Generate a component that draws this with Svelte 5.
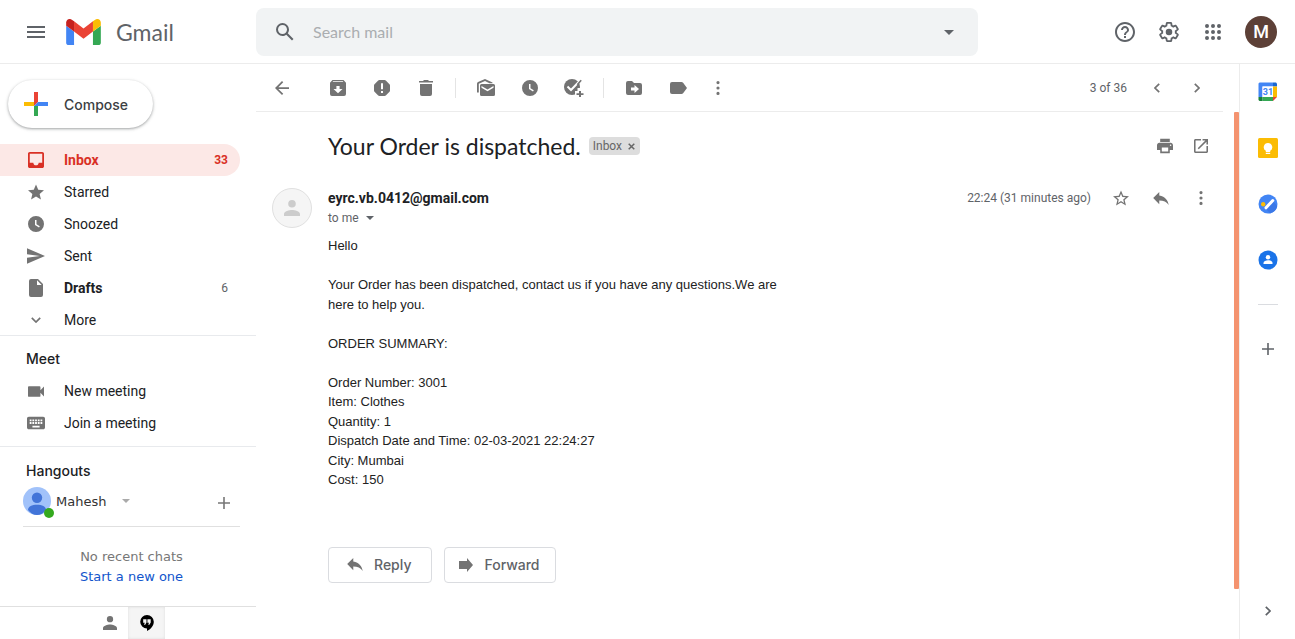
<script>
  const icons = {
    menu: { vb: '3 6 18 12', w: 18, h: 12, d: 'M3 18h18v-2H3v2zm0-5h18v-2H3v2zm0-7v2h18V6H3z' },
    search: { vb: '0 0 24 24', w: 24, h: 24, d: 'M20.49 19l-5.73-5.73C15.53 12.2 16 10.91 16 9.5A6.5 6.5 0 1 0 9.5 16c1.41 0 2.7-.47 3.77-1.24L19 20.49 20.49 19zM5 9.5C5 7.01 7.01 5 9.5 5S14 7.01 14 9.5 11.99 14 9.5 14 5 11.99 5 9.5z' },
    caret: { vb: '0 0 10 5', w: 10, h: 5, d: 'M0 0h10L5 5z' },
    smallCaret: { vb: '0 0 8 4', w: 8, h: 4, d: 'M0 0h8L4 4z' },
    help: { vb: '2 2 20 20', w: 20, h: 20, d: 'M11 18h2v-2h-2v2zm1-16C6.48 2 2 6.48 2 12s4.48 10 10 10 10-4.48 10-10S17.52 2 12 2zm0 18c-4.41 0-8-3.59-8-8s3.59-8 8-8 8 3.59 8 8-3.59 8-8 8zm0-14c-2.21 0-4 1.79-4 4h2c0-1.1.9-2 2-2s2 .9 2 2c0 2-3 1.75-3 5h2c0-2.25 3-2.5 3-5 0-2.21-1.79-4-4-4z' },
    gear: {
      vb: '1 1 22 22', w: 20, h: 20,
      d: 'M12 8.4a3.6 3.6 0 1 0 0 7.2 3.6 3.6 0 0 0 0-7.2z',
      s: 'M19.43 12.98c.04-.32.07-.64.07-.98s-.03-.66-.07-.98l2.11-1.65c.19-.15.24-.42.12-.64l-2-3.46c-.12-.22-.39-.3-.61-.22l-2.49 1c-.52-.4-1.08-.73-1.69-.98l-.38-2.65C14.46 2.18 14.25 2 14 2h-4c-.25 0-.46.18-.49.42l-.38 2.65c-.61.25-1.17.59-1.69.98l-2.49-1c-.23-.09-.49 0-.61.22l-2 3.46c-.13.22-.07.49.12.64l2.11 1.65c-.04.32-.07.65-.07.98s.03.66.07.98l-2.11 1.65c-.19.15-.24.42-.12.64l2 3.46c.12.22.39.3.61.22l2.49-1c.52.4 1.08.73 1.69.98l.38 2.65c.03.24.24.42.49.42h4c.25 0 .46-.18.49-.42l.38-2.65c.61-.25 1.17-.59 1.69-.98l2.49 1c.23.09.49 0 .61-.22l2-3.46c.12-.22.07-.49-.12-.64z'
    },
    apps: { vb: '4 4 16 16', w: 16, h: 16, d: 'M6 4a2 2 0 1 0 0 4 2 2 0 0 0 0-4zm6 0a2 2 0 1 0 0 4 2 2 0 0 0 0-4zm6 0a2 2 0 1 0 0 4 2 2 0 0 0 0-4zM6 10a2 2 0 1 0 0 4 2 2 0 0 0 0-4zm6 0a2 2 0 1 0 0 4 2 2 0 0 0 0-4zm6 0a2 2 0 1 0 0 4 2 2 0 0 0 0-4zM6 16a2 2 0 1 0 0 4 2 2 0 0 0 0-4zm6 0a2 2 0 1 0 0 4 2 2 0 0 0 0-4zm6 0a2 2 0 1 0 0 4 2 2 0 0 0 0-4z' },
    inbox: { vb: '3 3 18 18', w: 16, h: 16, d: 'M19 3H5c-1.1 0-2 .9-2 2v14c0 1.1.9 2 2 2h14c1.1 0 2-.9 2-2V5c0-1.1-.9-2-2-2zm0 12h-4c0 1.66-1.35 3-3 3s-3-1.34-3-3H5V5h14v10z' },
    star: { vb: '2 2 20 19', w: 16, h: 16, d: 'M12 17.27L18.18 21l-1.64-7.03L22 9.24l-7.19-.61L12 2 9.19 8.63 2 9.24l5.46 4.73L5.82 21z' },
    starOutline: { vb: '2 2 20 19', w: 16, h: 16, d: 'M22 9.24l-7.19-.62L12 2 9.19 8.63 2 9.24l5.46 4.73L5.82 21 12 17.27 18.18 21l-1.63-7.03L22 9.24zM12 15.4l-3.76 2.27 1-4.28-3.32-2.88 4.38-.38L12 6.1l1.71 4.04 4.38.38-3.32 2.88 1 4.28L12 15.4z' },
    clock: { vb: '0 0 16 16', w: 16, h: 16, d: 'M8 0a8 8 0 1 0 0 16A8 8 0 0 0 8 0zM7 4h1.5v4.2l3.3 2-.8 1.3-4-2.4z' },
    send: { vb: '2 3 21 18', w: 18, h: 16, d: 'M2 21L23 12 2 3v7l15 2-15 2z' },
    file: { vb: '0 0 14 18', w: 14, h: 18, d: 'M2 0h7l5 5v11a2 2 0 0 1-2 2H2a2 2 0 0 1-2-2V2a2 2 0 0 1 2-2zM8 1.3V6h4.7z' },
    down: { vb: '0 0 10 6', w: 10, h: 6, s: 'M.8.8L5 5 9.2.8', sw: 1.7 },
    video: { vb: '3 6 18 12', w: 16, h: 11, d: 'M17 10.5V7c0-.55-.45-1-1-1H4c-.55 0-1 .45-1 1v10c0 .55.45 1 1 1h12c.55 0 1-.45 1-1v-3.5l4 4v-11l-4 4z' },
    keyboard: { vb: '2 5 20 14', w: 18, h: 14, d: 'M20 5H4c-1.1 0-2 .9-2 2v10c0 1.1.9 2 2 2h16c1.1 0 2-.9 2-2V7c0-1.1-.9-2-2-2zm-9 3h2v2h-2V8zm0 3h2v2h-2v-2zM8 8h2v2H8V8zm0 3h2v2H8v-2zm-1 2H5v-2h2v2zm0-3H5V8h2v2zm9 7H8v-2h8v2zm0-4h-2v-2h2v2zm0-3h-2V8h2v2zm3 3h-2v-2h2v2zm0-3h-2V8h2v2z' },
    plus: { vb: '0 0 12 12', w: 12, h: 12, d: 'M5.2 0h1.6v5.2H12v1.6H6.8V12H5.2V6.8H0V5.2h5.2z' },
    person: { vb: '4 4 16 16', w: 14, h: 14, d: 'M12 11.2a3.6 3.6 0 1 0 0-7.2 3.6 3.6 0 0 0 0 7.2zm0 2.4c-2.67 0-8 1.34-8 4.2V20h16v-2.200c0-2.860-5.330-4.200-8-4.200z' },
    profile: { vb: '4 4 16 16', w: 16, h: 16, d: 'M12 11.600a3.800 3.800 0 1 0 0-7.600 3.800 3.800 0 0 0 0 7.600zm0 2.400c-2.670 0-8 1.340-8 4v2h16v-2c0-2.660-5.330-4-8-4z' },
    hangouts: { vb: '0 0 14 16', w: 14, h: 16, d: 'M7 0a6.8 6.8 0 0 0 0 13.6V16c3.6-1.7 6.8-5 6.8-9.2A6.8 6.8 0 0 0 7 0zM3.2 4.3h3.3v3.2L5.2 9.7H4l.8-2H3.2zm4.2 0h3.3v3.2L9.4 9.7H8.2l.8-2H7.4z' },
    back: { vb: '4 4 16 16', w: 14, h: 14, d: 'M20 11H7.83l5.59-5.59L12 4l-8 8 8 8 1.41-1.41L7.83 13H20v-2z' },
    archive: { vb: '0 0 16 16', w: 16, h: 16, d: 'M2.5 0h11L16 2.8V14a2 2 0 0 1-2 2H2a2 2 0 0 1-2-2V2.8zM2.6 2h10.8l-.6-.8H3.2zM6.4 6v3H3.5L8 13.2 12.5 9H9.6V6z' },
    spam: { vb: '0 0 16 16', w: 16, h: 16, d: 'M5.4 0h5.2a2 2 0 0 1 1.2.5l3.7 3.7a2 2 0 0 1 .5 1.2v5.2a2 2 0 0 1-.5 1.2l-3.7 3.7a2 2 0 0 1-1.2.5H5.4a2 2 0 0 1-1.2-.5L.5 11.8a2 2 0 0 1-.5-1.2V5.4a2 2 0 0 1 .5-1.2L4.2.5A2 2 0 0 1 5.4 0zM7 3.300v6h2v-6zM7 11v2h2v-2z' },
    trash: { vb: '0 0 14 16', w: 14, h: 16, d: 'M1 4h12v10a2 2 0 0 1-2 2H3a2 2 0 0 1-2-2zM0 1h4l1-1h4l1 1h4v1.500H0z' },
    unread: { vb: '0 0 18 17', w: 18, h: 17, d: 'M4.5 5h12A1.5 1.5 0 0 1 18 6.5v9a1.5 1.5 0 0 1-1.5 1.5h-12A1.5 1.5 0 0 1 3 15.5v-9A1.5 1.5 0 0 1 4.5 5zM4.500 7v1.800l6 3.400 6-3.400V7l-6 3.400zM0 13.5V4.8a2 2 0 0 1 1-1.7L8 0l7.500 3.600v.6h-3L8 2 1.800 4.800v8.700z' },
    folder: { vb: '0 0 16 14', w: 16, h: 14, d: 'M2 0h4l2 2h6a2 2 0 0 1 2 2v8a2 2 0 0 1-2 2H2a2 2 0 0 1-2-2V2a2 2 0 0 1 2-2zM5 6.5v3h3.500V12L13 8 8.500 4v2.500z' },
    label: { vb: '0 0 17 12', w: 17, h: 12, d: 'M2 0h9.5a2 2 0 0 1 1.6.8L17 6l-3.900 5.200a2 2 0 0 1-1.6.8H2a2 2 0 0 1-2-2V2a2 2 0 0 1 2-2z' },
    more: { vb: '0 0 4 14', w: 4, h: 14, d: 'M2 0a1.6 1.6 0 1 0 0 3.200A1.600 1.600 0 0 0 2 0zm0 5.400a1.600 1.600 0 1 0 0 3.200 1.600 1.600 0 0 0 0-3.200zm0 5.400a1.600 1.600 0 1 0 0 3.200 1.600 1.600 0 0 0 0-3.200z' },
    left: { vb: '0 0 6 10', w: 6, h: 10, s: 'M5.2.8L1 5l4.200 4.200', sw: 1.7 },
    right: { vb: '0 0 6 10', w: 6, h: 10, s: 'M.8.8L5 5 .8 9.200', sw: 1.7 },
    print: { vb: '2 3 20 18', w: 16, h: 16, d: 'M19 8H5c-1.66 0-3 1.34-3 3v6h4v4h12v-4h4v-6c0-1.66-1.34-3-3-3zm-3 11H8v-5h8v5zm3-7c-.55 0-1-.45-1-1s.45-1 1-1 1 .45 1 1-.45 1-1 1zm-1-9H6v4h12V3z' },
    open: { vb: '3 3 18 18', w: 14, h: 14, d: 'M19 19H5V5h7V3H5c-1.11 0-2 .9-2 2v14c0 1.1.89 2 2 2h14c1.1 0 2-.9 2-2v-7h-2v7zM14 3v2h3.59l-9.83 9.83 1.41 1.41L19 6.41V10h2V3h-7z' },
    reply: { vb: '3 5 18 15', w: 16, h: 13, d: 'M10 9V5l-7 7 7 7v-4.100c5 0 8.500 1.600 11 5.100-1-5-4-10-11-11z' },
    forward: { vb: '0 0 14 14', w: 14, h: 14, d: 'M0 3h8V0l6 7-6 7v-3H0z' },
    close: { vb: '0 0 7 7', w: 7, h: 7, s: 'M.7.7l5.600 5.600M6.300.7L.7 6.300', sw: 1.5 }
  };

  const folders = [
    { name: 'Inbox', icon: 'inbox', count: 33, active: true },
    { name: 'Starred', icon: 'star' },
    { name: 'Snoozed', icon: 'clock' },
    { name: 'Sent', icon: 'send' },
    { name: 'Drafts', icon: 'file', count: 6, bold: true },
    { name: 'More', icon: 'down' }
  ];
  const meetings = [
    { name: 'New meeting', icon: 'video' },
    { name: 'Join a meeting', icon: 'keyboard' }
  ];
  const order = [
    'Order Number: 3001',
    'Item: Clothes',
    'Quantity: 1',
    'Dispatch Date and Time: 02-03-2021 22:24:27',
    'City: Mumbai',
    'Cost: 150'
  ];
</script>

{#snippet icon(name)}
  {@const i = icons[name]}
  <svg class="icon" viewBox={i.vb} width={i.w} height={i.h} aria-hidden="true">
    {#if i.d}<path d={i.d} fill="currentColor" fill-rule="evenodd" />{/if}
    {#if i.s}<path d={i.s} fill="none" stroke="currentColor" stroke-width={i.sw ?? 2} />{/if}
  </svg>
{/snippet}

{#snippet tool(name, label)}
  <button class="tool" aria-label={label}>{@render icon(name)}</button>
{/snippet}

<div class="page">
  <header class="top">
    <div class="brand">
      <button class="tool" aria-label="Main menu">{@render icon('menu')}</button>
      <a class="logo" href="#inbox">
        <svg viewBox="52 42 88 66" width="35" height="26" aria-hidden="true">
          <path fill="#4285f4" d="M58 108h14V74L52 59v43c0 3.320 2.690 6 6 6" />
          <path fill="#34a853" d="M120 108h14c3.320 0 6-2.690 6-6V59l-20 15" />
          <path fill="#fbbc04" d="M120 48v26l20-15v-8c0-7.420-8.470-11.650-14.400-7.200" />
          <path fill="#ea4335" d="M72 74V48l24 18 24-18v26L96 92" />
          <path fill="#c5221f" d="M52 51v8l20 15V48l-5.600-4.200c-5.940-4.450-14.400-.22-14.400 7.200" />
        </svg>
        <span>Gmail</span>
      </a>
    </div>
    <form class="search" role="search">
      <button class="find" type="button" aria-label="Search">{@render icon('search')}</button>
      <input type="text" placeholder="Search mail" aria-label="Search mail" />
      <button class="options" type="button" aria-label="Search options">{@render icon('caret')}</button>
    </form>
    <div class="account">
      {@render tool('help', 'Support')}
      {@render tool('gear', 'Settings')}
      {@render tool('apps', 'Apps')}
      <button class="me" aria-label="Account">M</button>
    </div>
  </header>

  <div class="body">
    <aside class="side">
      <button class="compose">
        <svg viewBox="0 0 24 24" width="24" height="24" aria-hidden="true">
          <path fill="#ea4335" d="M10 0h4v10l-4 4z" />
          <path fill="#fbbc04" d="M0 10h10v4H0z" />
          <path fill="#4285f4" d="M14 10h10v4H10z" />
          <path fill="#34a853" d="M10 14h4v10h-4z" />
        </svg>
        Compose
      </button>

      <nav>
        {#each folders as f}
          <a class="row" class:active={f.active} class:bold={f.bold} href="#{f.name}">
            <span class="glyph">{@render icon(f.icon)}</span>
            <span class="name">{f.name}</span>
            {#if f.count}<span class="count">{f.count}</span>{/if}
          </a>
        {/each}
      </nav>

      <section class="block">
        <h2>Meet</h2>
        {#each meetings as m}
          <a class="row" href="#{m.icon}">
            <span class="glyph">{@render icon(m.icon)}</span>
            <span class="name">{m.name}</span>
          </a>
        {/each}
      </section>

      <section class="chat">
        <h2>Hangouts</h2>
        <div class="profile">
          <span class="face">
            <svg viewBox="0 0 28 28" width="28" height="28" aria-hidden="true">
              <circle cx="14" cy="14" r="14" fill="#a1c2fa" />
              <circle cx="14" cy="10.8" r="5.2" fill="#4274d8" />
              <path d="M5 23c0-3.500 4-5.200 9-5.200s9 1.700 9 5.200c-2.300 3-5.500 5-9 5s-6.700-2-9-5z" fill="#4274d8" />
            </svg>
            <i class="online"></i>
          </span>
          <button class="status">Mahesh {@render icon('smallCaret')}</button>
          <button class="add" aria-label="New conversation">{@render icon('plus')}</button>
        </div>
        <p>No recent chats<br /><a href="#chat">Start a new one</a></p>
      </section>

      <footer class="tabs">
        <button aria-label="Contacts">{@render icon('person')}</button>
        <button class="on" aria-label="Hangouts conversations">{@render icon('hangouts')}</button>
      </footer>
    </aside>

    <main>
      <div class="toolbar">
        <div class="group first">{@render tool('back', 'Back to Inbox')}</div>
        <div class="group">
          {@render tool('archive', 'Archive')}
          {@render tool('spam', 'Report spam')}
          {@render tool('trash', 'Delete')}
        </div>
        <div class="group">
          {@render tool('unread', 'Mark as unread')}
          {@render tool('clock', 'Snooze')}
          <button class="tool" aria-label="Add to Tasks">
            <svg class="icon" viewBox="0 0 20 18" width="20" height="18" aria-hidden="true">
              <circle cx="8" cy="8" r="8" fill="currentColor" />
              <path d="M3.500 7.500L7 11l10-10.500" fill="none" stroke="#fff" stroke-width="2" />
              <path d="M13.300 5.800L17.200 1.300" fill="none" stroke="currentColor" stroke-width="1.6" />
              <path d="M11 12h2.500V9H20v9h-9z" fill="#fff" />
              <path d="M15 12h2v2.200h2.500v1.800H17V18h-2v-2h-2.500v-1.800H15z" fill="currentColor" />
            </svg>
          </button>
        </div>
        <div class="group">
          {@render tool('folder', 'Move to')}
          {@render tool('label', 'Labels')}
          <button class="tool narrow" aria-label="More">{@render icon('more')}</button>
        </div>
        <div class="pager">
          <span>3 of 36</span>
          {@render tool('left', 'Newer')}
          {@render tool('right', 'Older')}
        </div>
      </div>

      <div class="view">
        <article>
          <div class="subject">
            <h1>Your Order is dispatched.</h1>
            <span class="tag">Inbox <button aria-label="Remove label Inbox">{@render icon('close')}</button></span>
            <div class="actions">
              {@render tool('print', 'Print all')}
              {@render tool('open', 'In new window')}
            </div>
          </div>

          <div class="message">
            <span class="sender">{@render icon('profile')}</span>
            <div class="content">
              <div class="meta">
                <div>
                  <h3>eyrc.vb.0412@gmail.com</h3>
                  <button class="to">to me {@render icon('smallCaret')}</button>
                </div>
                <div class="when">
                  <span>22:24 (31 minutes ago)</span>
                  {@render tool('starOutline', 'Star')}
                  {@render tool('reply', 'Reply')}
                  {@render tool('more', 'More')}
                </div>
              </div>
              <div class="text">
                Hello<br /><br />
                Your Order has been dispatched, contact us if you have any questions.We are<br />
                here to help you.<br /><br />
                ORDER SUMMARY:<br /><br />
                {#each order as line}{line}<br />{/each}
              </div>
              <div class="respond">
                <button>{@render icon('reply')} Reply</button>
                <button>{@render icon('forward')} Forward</button>
              </div>
            </div>
          </div>
        </article>
        <div class="track"><div class="thumb"></div></div>
      </div>
    </main>

    <aside class="addons">
      <button aria-label="Calendar">
        <svg viewBox="0 0 20 20" width="20" height="20" aria-hidden="true">
          <path fill="#4285f4" d="M1.500.5H15v4H4.500V15H.5V1.500z" />
          <path fill="#1967d2" d="M15 .5h3l1 1v3h-4z" />
          <path fill="#fbbc04" d="M15 4.500h4V15h-4z" />
          <path fill="#34a853" d="M4.500 15H15v4H4.500z" />
          <path fill="#188038" d="M.5 15h4v4h-3l-1-1z" />
          <path fill="#ea4335" d="M15 15h4l-4 4z" />
          <path fill="#fff" d="M4.500 4.500H15V15H4.500z" />
          <text x="10" y="13" text-anchor="middle">31</text>
        </svg>
      </button>
      <button aria-label="Keep">
        <svg viewBox="0 0 20 20" width="20" height="20" aria-hidden="true">
          <rect width="20" height="20" rx="1.5" fill="#fbbc04" />
          <path fill="#fff" d="M10 5a4.200 4.200 0 0 0-2.200 7.800V14h4.400v-1.200A4.200 4.200 0 0 0 10 5zM7.800 14.800h4.400V16H7.800z" />
        </svg>
      </button>
      <button aria-label="Tasks">
        <svg viewBox="0 0 20 20" width="20" height="20" aria-hidden="true">
          <circle cx="10" cy="10" r="9.5" fill="#4285f4" />
          <path d="M8 15l7-8 4.300 5a9.500 9.500 0 0 1-7.300 7.300z" fill="#3b78e7" />
          <path d="M8 13.800L14.800 6.500" stroke="#fff" stroke-width="3" stroke-linecap="round" />
          <circle cx="5.2" cy="10.2" r="2.2" fill="#fbbc04" />
        </svg>
      </button>
      <button aria-label="Contacts">
        <svg viewBox="0 0 20 20" width="20" height="20" aria-hidden="true">
          <circle cx="10" cy="10" r="9.5" fill="#1a73e8" />
          <circle cx="10" cy="7.2" r="2.2" fill="#fff" />
          <path d="M5.500 14v-1c0-1.800 2.500-2.700 4.500-2.700s4.500.9 4.500 2.700v1z" fill="#fff" />
        </svg>
      </button>
      <hr />
      <button aria-label="Get add-ons">{@render icon('plus')}</button>
      <button class="hide" aria-label="Hide side panel">{@render icon('right')}</button>
    </aside>
  </div>
</div>

<style>
  :global(body) {
    margin: 0;
    background: #fff;
  }
  .page {
    display: flex;
    flex-direction: column;
    min-height: 100vh;
    font-family: Roboto, 'Liberation Sans', sans-serif;
    font-size: 14px;
    color: #202124;
  }
  .page * {
    box-sizing: border-box;
  }
  button {
    display: flex;
    align-items: center;
    justify-content: center;
    padding: 0;
    border: 0;
    background: none;
    color: inherit;
    font: inherit;
    cursor: pointer;
  }
  a {
    color: inherit;
    text-decoration: none;
  }
  h1, h2, h3, p {
    margin: 0;
    font-weight: 400;
  }
  svg {
    display: block;
    flex: none;
  }
  .tool {
    width: 44px;
    height: 40px;
    color: #737373;
  }

  .top {
    display: flex;
    align-items: center;
    height: 64px;
    padding-right: 18px;
    border-bottom: 1px solid #ececec;
  }
  .top .tool {
    color: #5f6368;
  }
  .brand {
    display: flex;
    align-items: center;
    flex: none;
    width: 256px;
    padding-left: 14px;
  }
  .logo {
    display: flex;
    align-items: center;
    gap: 15px;
    margin-left: 8px;
    font-family: Lato, sans-serif;
    font-size: 23px;
    color: #5f6368;
  }
  .search {
    display: flex;
    align-items: center;
    flex: 1;
    max-width: 722px;
    height: 48px;
    border-radius: 8px;
    background: #f1f3f4;
  }
  .find {
    width: 57px;
    height: 48px;
    color: #5f6368;
  }
  .search input {
    flex: 1;
    min-width: 0;
    padding: 0;
    border: 0;
    outline: 0;
    background: none;
    font-family: Lato, sans-serif;
    font-size: 16px;
    color: #202124;
  }
  .search input::placeholder {
    color: #aaadb0;
    opacity: 1;
  }
  .options {
    width: 58px;
    height: 48px;
    padding-top: 1px;
    color: #5f6368;
  }
  .account {
    display: flex;
    align-items: center;
    margin-left: auto;
  }
  .me {
    width: 32px;
    height: 32px;
    margin-left: 10px;
    border-radius: 50%;
    background: #5d4037;
    color: #fff;
    font-size: 18px;
    font-weight: 500;
  }

  .body {
    display: grid;
    grid-template-columns: 256px minmax(0, 1fr) 56px;
    flex: 1;
  }

  .side {
    display: flex;
    flex-direction: column;
    padding-top: 16px;
  }
  .compose {
    align-self: flex-start;
    gap: 16px;
    height: 48px;
    margin: 0 0 16px 8px;
    padding: 0 25px 0 16px;
    border-radius: 24px;
    box-shadow: 0 1px 2px rgba(60, 64, 67, 0.3), 0 1px 3px 1px rgba(60, 64, 67, 0.15);
    color: #3c4043;
    font-family: Inter, sans-serif;
    font-weight: 500;
  }
  .row {
    display: flex;
    align-items: center;
    height: 32px;
    margin-right: 16px;
    padding: 0 12px 0 26px;
    border-radius: 0 16px 16px 0;
  }
  .glyph {
    display: flex;
    align-items: center;
    justify-content: center;
    width: 20px;
    height: 20px;
    margin-right: 18px;
    color: #737373;
  }
  .name {
    flex: 1;
  }
  .count {
    font-size: 12px;
    color: #5f6368;
  }
  .active {
    background: #fce8e6;
    font-weight: 700;
  }
  .active, .active .glyph, .active .count {
    color: #d93025;
  }
  .bold .name {
    font-weight: 700;
  }
  .block, .chat {
    box-shadow: 0 -1px 0 #e8eaed;
  }
  .block {
    padding-bottom: 8px;
  }
  h2 {
    padding: 13px 0 6px 26px;
    font-family: Inter, sans-serif;
    font-size: 14px;
    font-weight: 500;
    line-height: 20px;
  }
  .chat {
    flex: 1;
    font-family: 'DejaVu Sans', sans-serif;
    font-size: 13px;
  }
  .chat h2 {
    padding-top: 14px;
  }
  .profile {
    display: flex;
    align-items: center;
    margin: 0 16px 0 23px;
    padding-bottom: 11px;
    border-bottom: 1px solid #e0e0e0;
  }
  .face {
    position: relative;
    margin-right: 5px;
  }
  .online {
    position: absolute;
    right: -3px;
    bottom: -3px;
    width: 10px;
    height: 10px;
    border-radius: 50%;
    background: #34a91e;
  }
  .status {
    gap: 16px;
    color: #333;
  }
  .status .icon {
    color: #aaa;
  }
  .add {
    width: 32px;
    height: 28px;
    margin-left: auto;
    padding-top: 4px;
    color: #777;
  }
  .chat p {
    margin: 20px 0 19px 7px;
    line-height: 20px;
    text-align: center;
    color: #777;
  }
  .chat p a {
    color: #1155cc;
  }
  .tabs {
    display: flex;
    height: 33px;
    padding-left: 91px;
    border-top: 1px solid #e0e0e0;
  }
  .tabs button {
    width: 37px;
    color: #737373;
  }
  .tabs .on {
    background: #f5f5f5;
    box-shadow: inset 0 0 3px #ddd;
    color: #000;
  }

  main {
    display: flex;
    flex-direction: column;
  }
  .toolbar {
    display: flex;
    align-items: center;
    height: 48px;
    margin-right: 16px;
    padding: 0 6px 0 4px;
    border-bottom: 1px solid #ececec;
  }
  .group {
    display: flex;
    align-items: center;
  }
  .first {
    margin-right: 12px;
  }
  .group + .group + .group::before {
    content: '';
    width: 1px;
    height: 20px;
    margin: 0 8px 0 7px;
    background: #e4e4e4;
  }
  .toolbar .narrow {
    width: 36px;
  }
  .pager {
    display: flex;
    align-items: center;
    margin-left: auto;
    font-size: 12px;
    color: #5f6368;
  }
  .pager span {
    margin-right: 10px;
  }
  .pager .tool, .when .tool {
    width: 40px;
  }
  .view {
    display: flex;
    flex: 1;
  }
  article {
    flex: 1;
    min-width: 0;
    padding: 16px 2px 0 16px;
  }
  .subject {
    display: flex;
    align-items: center;
    height: 36px;
    padding-left: 56px;
  }
  h1 {
    font-family: Lato, sans-serif;
    font-size: 23px;
    line-height: 28px;
  }
  .tag {
    display: flex;
    align-items: center;
    gap: 6px;
    height: 18px;
    margin-left: 8px;
    padding: 0 5px 0 4px;
    border-radius: 4px;
    background: #ddd;
    color: #666;
    font-size: 12px;
  }
  .actions {
    display: flex;
    margin-left: auto;
    padding-right: 2px;
  }
  .actions .tool {
    width: 36px;
  }
  .message {
    display: flex;
    gap: 16px;
    padding-top: 24px;
  }
  .sender {
    display: flex;
    align-items: center;
    justify-content: center;
    flex: none;
    width: 40px;
    height: 40px;
    border: 1px solid #e0e0e0;
    border-radius: 50%;
    background: #f5f5f5;
    color: #ccc;
  }
  .content {
    flex: 1;
    min-width: 0;
  }
  .meta {
    display: flex;
    justify-content: space-between;
    height: 48px;
  }
  h3 {
    font-size: 14px;
    font-weight: 700;
    line-height: 20px;
  }
  .to {
    gap: 7px;
    height: 20px;
    color: #5f6368;
    font-size: 12px;
  }
  .when {
    display: flex;
    align-items: center;
    height: 20px;
    color: #5f6368;
    font-size: 12px;
  }
  .when span {
    margin-right: 10px;
  }
  .text {
    font-family: 'Liberation Sans', Arial, sans-serif;
    font-size: 13px;
    line-height: 1.5;
    color: #222;
  }
  .respond {
    display: flex;
    gap: 12px;
    margin-top: 57px;
  }
  .respond button {
    gap: 11px;
    height: 36px;
    padding: 0 15px 0 14px;
    border: 1px solid #dadce0;
    border-radius: 4px;
    color: #5f6368;
    font-family: Inter, sans-serif;
    font-weight: 500;
  }
  .respond button:first-child {
    padding: 0 20px 0 18px;
  }
  .respond .icon {
    color: #737373;
  }
  .track {
    display: flex;
    flex: none;
    justify-content: flex-end;
    width: 16px;
    padding-bottom: 50px;
  }
  .thumb {
    width: 5px;
    border-radius: 1px;
    background: #f4936f;
  }

  .addons {
    display: flex;
    flex-direction: column;
    align-items: center;
    border-left: 1px solid #ececec;
    padding-left: 1px;
    color: #5f6368;
  }
  .addons button {
    width: 100%;
    height: 56px;
  }
  .addons text {
    font: 700 9px Roboto, sans-serif;
    fill: #4285f4;
  }
  .addons hr {
    width: 20px;
    height: 1px;
    margin: 16px 0;
    border: 0;
    background: #dadce0;
  }
  .addons .hide {
    margin-top: auto;
  }
</style>
